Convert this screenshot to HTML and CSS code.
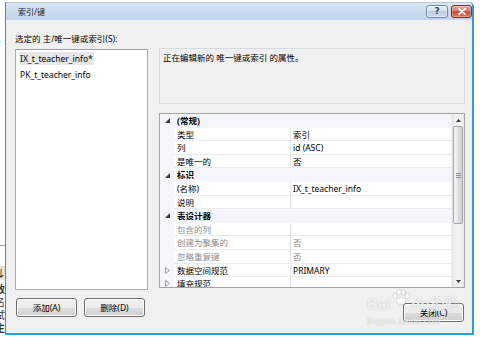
FILE: index.html
```html
<!DOCTYPE html>
<html lang="zh-CN">
<head>
<meta charset="utf-8">
<title>索引/键</title>
<link rel="stylesheet" href="styles.css">
</head>
<body>
<div class="desktop">
  <span class="bg-glyph g1">e</span>
  <span class="bg-glyph g2">r</span>
  <div class="bg-line"></div>
  <div class="bg-box">↓</div>
  <span class="bg-glyph g3">敌</span>
  <span class="bg-glyph g4">名</span>
  <span class="bg-glyph g5">试</span>
  <span class="bg-glyph g6">生</span>
</div>

<div class="window">
  <div class="titlebar">
    <span class="title">索引/键</span>
    <div class="caption-btns">
      <div class="cap help"><span class="qmark">?</span></div>
      <div class="cap close">
        <svg width="8" height="7" viewBox="0 0 8 7"><path d="M1 0.8 L7 6.2 M7 0.8 L1 6.2" stroke="#fff" stroke-width="1.8" stroke-linecap="round"/></svg>
      </div>
    </div>
  </div>

  <div class="client">
    <div class="left">
      <div class="label">选定的 主/唯一键或索引(S):</div>
      <div class="listbox">
        <div class="item"><span class="sel">IX_t_teacher_info*</span></div>
        <div class="item"><span>PK_t_teacher_info</span></div>
      </div>
      <div class="btnrow">
        <button class="btn">添加(A)</button>
        <button class="btn">删除(D)</button>
      </div>
    </div>

    <div class="right">
      <div class="desc">正在编辑新的 唯一键或索引 的属性。</div>
      <div class="grid">
        <div class="rows">
          <div class="row cat">
            <span class="glyph"><svg width="5" height="5" viewBox="0 0 5 5"><path d="M5 0 L5 5 L0 5 Z" fill="#3c3c3c"/></svg></span>
            <span class="catname">(常规)</span>
          </div>
          <div class="row"><span class="glyph"></span><span class="name">类型</span><span class="val">索引</span></div>
          <div class="row"><span class="glyph"></span><span class="name">列</span><span class="val">id (ASC)</span></div>
          <div class="row"><span class="glyph"></span><span class="name">是唯一的</span><span class="val">否</span></div>
          <div class="row cat">
            <span class="glyph"><svg width="5" height="5" viewBox="0 0 5 5"><path d="M5 0 L5 5 L0 5 Z" fill="#3c3c3c"/></svg></span>
            <span class="catname">标识</span>
          </div>
          <div class="row"><span class="glyph"></span><span class="name">(名称)</span><span class="val">IX_t_teacher_info</span></div>
          <div class="row"><span class="glyph"></span><span class="name">说明</span><span class="val"></span></div>
          <div class="row cat">
            <span class="glyph"><svg width="5" height="5" viewBox="0 0 5 5"><path d="M5 0 L5 5 L0 5 Z" fill="#3c3c3c"/></svg></span>
            <span class="catname">表设计器</span>
          </div>
          <div class="row dim"><span class="glyph"></span><span class="name">包含的列</span><span class="val"></span></div>
          <div class="row dim"><span class="glyph"></span><span class="name">创建为聚集的</span><span class="val">否</span></div>
          <div class="row dim"><span class="glyph"></span><span class="name">忽略重复键</span><span class="val">否</span></div>
          <div class="row">
            <span class="glyph"><svg width="5" height="7" viewBox="0 0 5 7"><path d="M0.5 0.5 L4.5 3.5 L0.5 6.5 Z" fill="none" stroke="#a0a0a0"/></svg></span>
            <span class="name">数据空间规范</span><span class="val">PRIMARY</span>
          </div>
          <div class="row">
            <span class="glyph"><svg width="5" height="7" viewBox="0 0 5 7"><path d="M0.5 0.5 L4.5 3.5 L0.5 6.5 Z" fill="none" stroke="#a0a0a0"/></svg></span>
            <span class="name">填充规范</span><span class="val"></span>
          </div>
        </div>
        <div class="scrollbar">
          <div class="sb-btn"><svg width="5" height="3" viewBox="0 0 5 3"><path d="M0 3 L2.5 0 L5 3 Z" fill="#3c3c3c"/></svg></div>
          <div class="sb-thumb">
            <div class="grip"><i></i><i></i><i></i></div>
          </div>
          <div class="sb-track"></div>
          <div class="sb-btn"><svg width="5" height="3" viewBox="0 0 5 3"><path d="M0 0 L5 0 L2.5 3 Z" fill="#3c3c3c"/></svg></div>
        </div>
      </div>
      <div class="closerow">
        <button class="btn">关闭(C)</button>
      </div>
    </div>
  </div>
</div>

<div class="watermark">
  <div class="wm-logo">
    <span>Bai</span>
    <svg class="paw" width="20" height="16" viewBox="0 0 20 16">
      <ellipse cx="4" cy="7" rx="2.2" ry="2.8" fill="rgba(255,255,255,0.85)" stroke="rgba(150,150,150,0.45)" stroke-width="0.7"/>
      <ellipse cx="8" cy="3.2" rx="2.2" ry="2.8" fill="rgba(255,255,255,0.85)" stroke="rgba(150,150,150,0.45)" stroke-width="0.7"/>
      <ellipse cx="12.5" cy="3.2" rx="2.2" ry="2.8" fill="rgba(255,255,255,0.85)" stroke="rgba(150,150,150,0.45)" stroke-width="0.7"/>
      <ellipse cx="16.5" cy="7" rx="2.2" ry="2.8" fill="rgba(255,255,255,0.85)" stroke="rgba(150,150,150,0.45)" stroke-width="0.7"/>
      <ellipse cx="10.2" cy="12" rx="4.5" ry="3.4" fill="rgba(255,255,255,0.85)" stroke="rgba(150,150,150,0.45)" stroke-width="0.7"/>
    </svg>
    <span>du经验</span>
  </div>
  <div class="wm-url">jingyan.baidu.com</div>
</div>
</body>
</html>
```

FILE: styles.css
```css
* { box-sizing: border-box; }

html, body {
  margin: 0;
  padding: 0;
}

body {
  width: 480px;
  height: 338px;
  overflow: hidden;
  position: relative;
  background: #ffffff;
  font-family: "Noto Sans", "Noto Sans CJK SC", sans-serif;
  font-size: 8.5px;
  color: #000;
}

/* ---------- desktop remnants on the far left ---------- */
.desktop {
  position: absolute;
  left: 0;
  top: 0;
  width: 480px;
  height: 338px;
}

.bg-glyph {
  position: absolute;
  left: -5px;
  font-size: 10px;
  line-height: 10px;
  color: #333;
}
.g1 { top: 37px; color: #555; }
.g2 { top: 95px; color: #555; }
.g3 { top: 284px; font-weight: bold; }
.g4 { top: 297px; }
.g5 { top: 310px; }
.g6 { top: 323px; font-weight: bold; }

.bg-line {
  position: absolute;
  left: 0;
  top: 245px;
  width: 5px;
  height: 1px;
  background: #a8a8a8;
}

.bg-box {
  position: absolute;
  left: -4px;
  top: 266px;
  width: 9px;
  height: 14px;
  background: #e9e4d2;
  font-size: 10px;
  line-height: 14px;
  color: #222;
  text-align: right;
}

/* ---------- window ---------- */
.window {
  position: absolute;
  left: 5px;
  top: 2px;
  width: 469px;
  height: 333px;
  display: flex;
  flex-direction: column;
  background: #f0f0f0;
  border-left: 1px solid #62809f;
  border-right: 2px solid #3896d5;
  border-bottom: 2px solid #2aa3d3;
  border-top-right-radius: 5px;
  overflow: hidden;
}

.titlebar {
  height: 18px;
  flex: none;
  display: flex;
  align-items: flex-start;
  justify-content: space-between;
  background: linear-gradient(#dce7f4 0%, #cbdcef 40%, #c2d5ec 100%);
  border-top: 1px solid #b6c9df;
}

.title {
  padding-left: 12px;
  line-height: 17px;
  font-size: 8px;
  color: #1b1b1b;
}

.caption-btns {
  display: flex;
  gap: 3px;
  margin-top: 2px;
}

.cap {
  height: 13px;
  border-radius: 3px;
  display: flex;
  align-items: center;
  justify-content: center;
}

.help {
  width: 22px;
  border: 1px solid #7088a6;
  background: linear-gradient(#eaf1f9 0%, #d3e0ef 45%, #bccde3 50%, #cddbec 100%);
  box-shadow: inset 0 0 0 1px rgba(255,255,255,0.45);
}

.qmark {
  font-family: "DejaVu Sans", sans-serif;
  font-size: 9px;
  line-height: 9px;
  font-weight: bold;
  color: #31445f;
}

.close {
  width: 21px;
  border: 1px solid #7a3028;
  background: linear-gradient(#e9a999 0%, #d8786a 45%, #c5493a 52%, #d77a62 100%);
  box-shadow: inset 0 0 0 1px rgba(255,255,255,0.3);
}

/* ---------- client ---------- */
.client {
  flex: 1;
  display: flex;
  gap: 11px;
  padding: 13px 7px 0 9px;
}

.left {
  width: 133px;
  flex: none;
  display: flex;
  flex-direction: column;
}

.label {
  height: 11px;
  line-height: 11px;
  margin-bottom: 5px;
  white-space: nowrap;
}

.listbox {
  height: 241px;
  background: #fff;
  border: 1px solid #a9acb2;
  border-top-color: #9a9ea5;
  padding: 2px 0 0 3px;
  display: flex;
  flex-direction: column;
  gap: 3px;
}

.item {
  height: 13px;
  line-height: 13px;
}

.item span {
  display: inline-block;
  padding: 0 1px;
}

.item .sel {
  background: #e7e7e7;
}

.btnrow {
  display: flex;
  gap: 7px;
  margin-top: 8px;
  padding-left: 1px;
}

.btn {
  width: 61px;
  height: 19px;
  padding: 0;
  border: 1px solid #707070;
  border-radius: 3px;
  background: linear-gradient(#f2f2f2 0%, #ebebeb 50%, #dddddd 51%, #cfcfcf 100%);
  box-shadow: inset 0 0 0 1px #fbfbfb;
  font-family: inherit;
  font-size: 8.5px;
  line-height: 17px;
  color: #000;
}

.right {
  width: 306px;
  flex: none;
  display: flex;
  flex-direction: column;
  padding-top: 15px;
}

.desc {
  height: 56px;
  border: 1px solid #d6dbe0;
  background: #f0f0f0;
  padding: 3px 3px 0 3px;
  line-height: 11px;
  white-space: nowrap;
}

/* ---------- property grid ---------- */
.grid {
  height: 175px;
  margin-top: 9px;
  border: 1px solid #a4a4a4;
  display: flex;
  background: #f3f6fb;
}

.rows {
  flex: 1;
  overflow: hidden;
  background: #f3f6fb;
}

.row {
  height: 13.6px;
  line-height: 13.6px;
  display: grid;
  grid-template-columns: 14px 117px 1fr;
  white-space: nowrap;
}

.glyph {
  display: flex;
  align-items: center;
  justify-content: center;
  padding-left: 1px;
}

.name {
  background: #fff;
  border-right: 1px solid #e4e7ea;
  border-bottom: 1px solid #e9ecef;
  padding-left: 3px;
  overflow: hidden;
}

.val {
  background: #fff;
  border-bottom: 1px solid #e9ecef;
  padding-left: 2px;
  overflow: hidden;
}

.catname {
  grid-column: 2 / 4;
  font-weight: bold;
  padding-left: 3px;
}

.dim .name,
.dim .val {
  color: #8d8d8d;
}

.scrollbar {
  width: 13px;
  flex: none;
  display: flex;
  flex-direction: column;
  background: linear-gradient(to right, #e6e6e6, #f2f2f2 30%, #f2f2f2 70%, #e8e8e8);
  border-left: 1px solid #ececec;
}

.sb-btn {
  height: 12px;
  flex: none;
  display: flex;
  align-items: center;
  justify-content: center;
}

.sb-thumb {
  height: 98px;
  flex: none;
  margin: 0 1px;
  border: 1px solid #a3a6ab;
  border-radius: 2px;
  background: linear-gradient(to right, #f5f5f5, #e9e9e9 50%, #dadada 51%, #d6d6d6);
  display: flex;
  align-items: center;
  justify-content: center;
}

.grip {
  display: flex;
  flex-direction: column;
  gap: 1px;
}

.grip i {
  display: block;
  width: 5px;
  height: 1px;
  background: #8c8f94;
}

.sb-track {
  flex: 1;
}

.closerow {
  display: flex;
  justify-content: flex-end;
  margin-top: 15px;
  padding-right: 1px;
}

/* ---------- watermark overlay ---------- */
.watermark {
  position: absolute;
  left: 367px;
  top: 287px;
  width: 100px;
  color: rgba(255, 255, 255, 0.82);
  text-shadow: 0 0 1px rgba(120, 120, 120, 0.55);
  pointer-events: none;
}

.wm-logo {
  display: flex;
  align-items: flex-end;
  font-family: "Liberation Sans", "Noto Sans CJK SC", sans-serif;
  font-size: 15px;
  font-weight: bold;
  line-height: 18px;
  height: 26px;
}

.paw {
  margin: 0 0 8px 1px;
}

.wm-url {
  font-family: "Liberation Sans", sans-serif;
  font-size: 8.5px;
  line-height: 10px;
  margin-top: 3px;
  letter-spacing: 0.3px;
}
```
